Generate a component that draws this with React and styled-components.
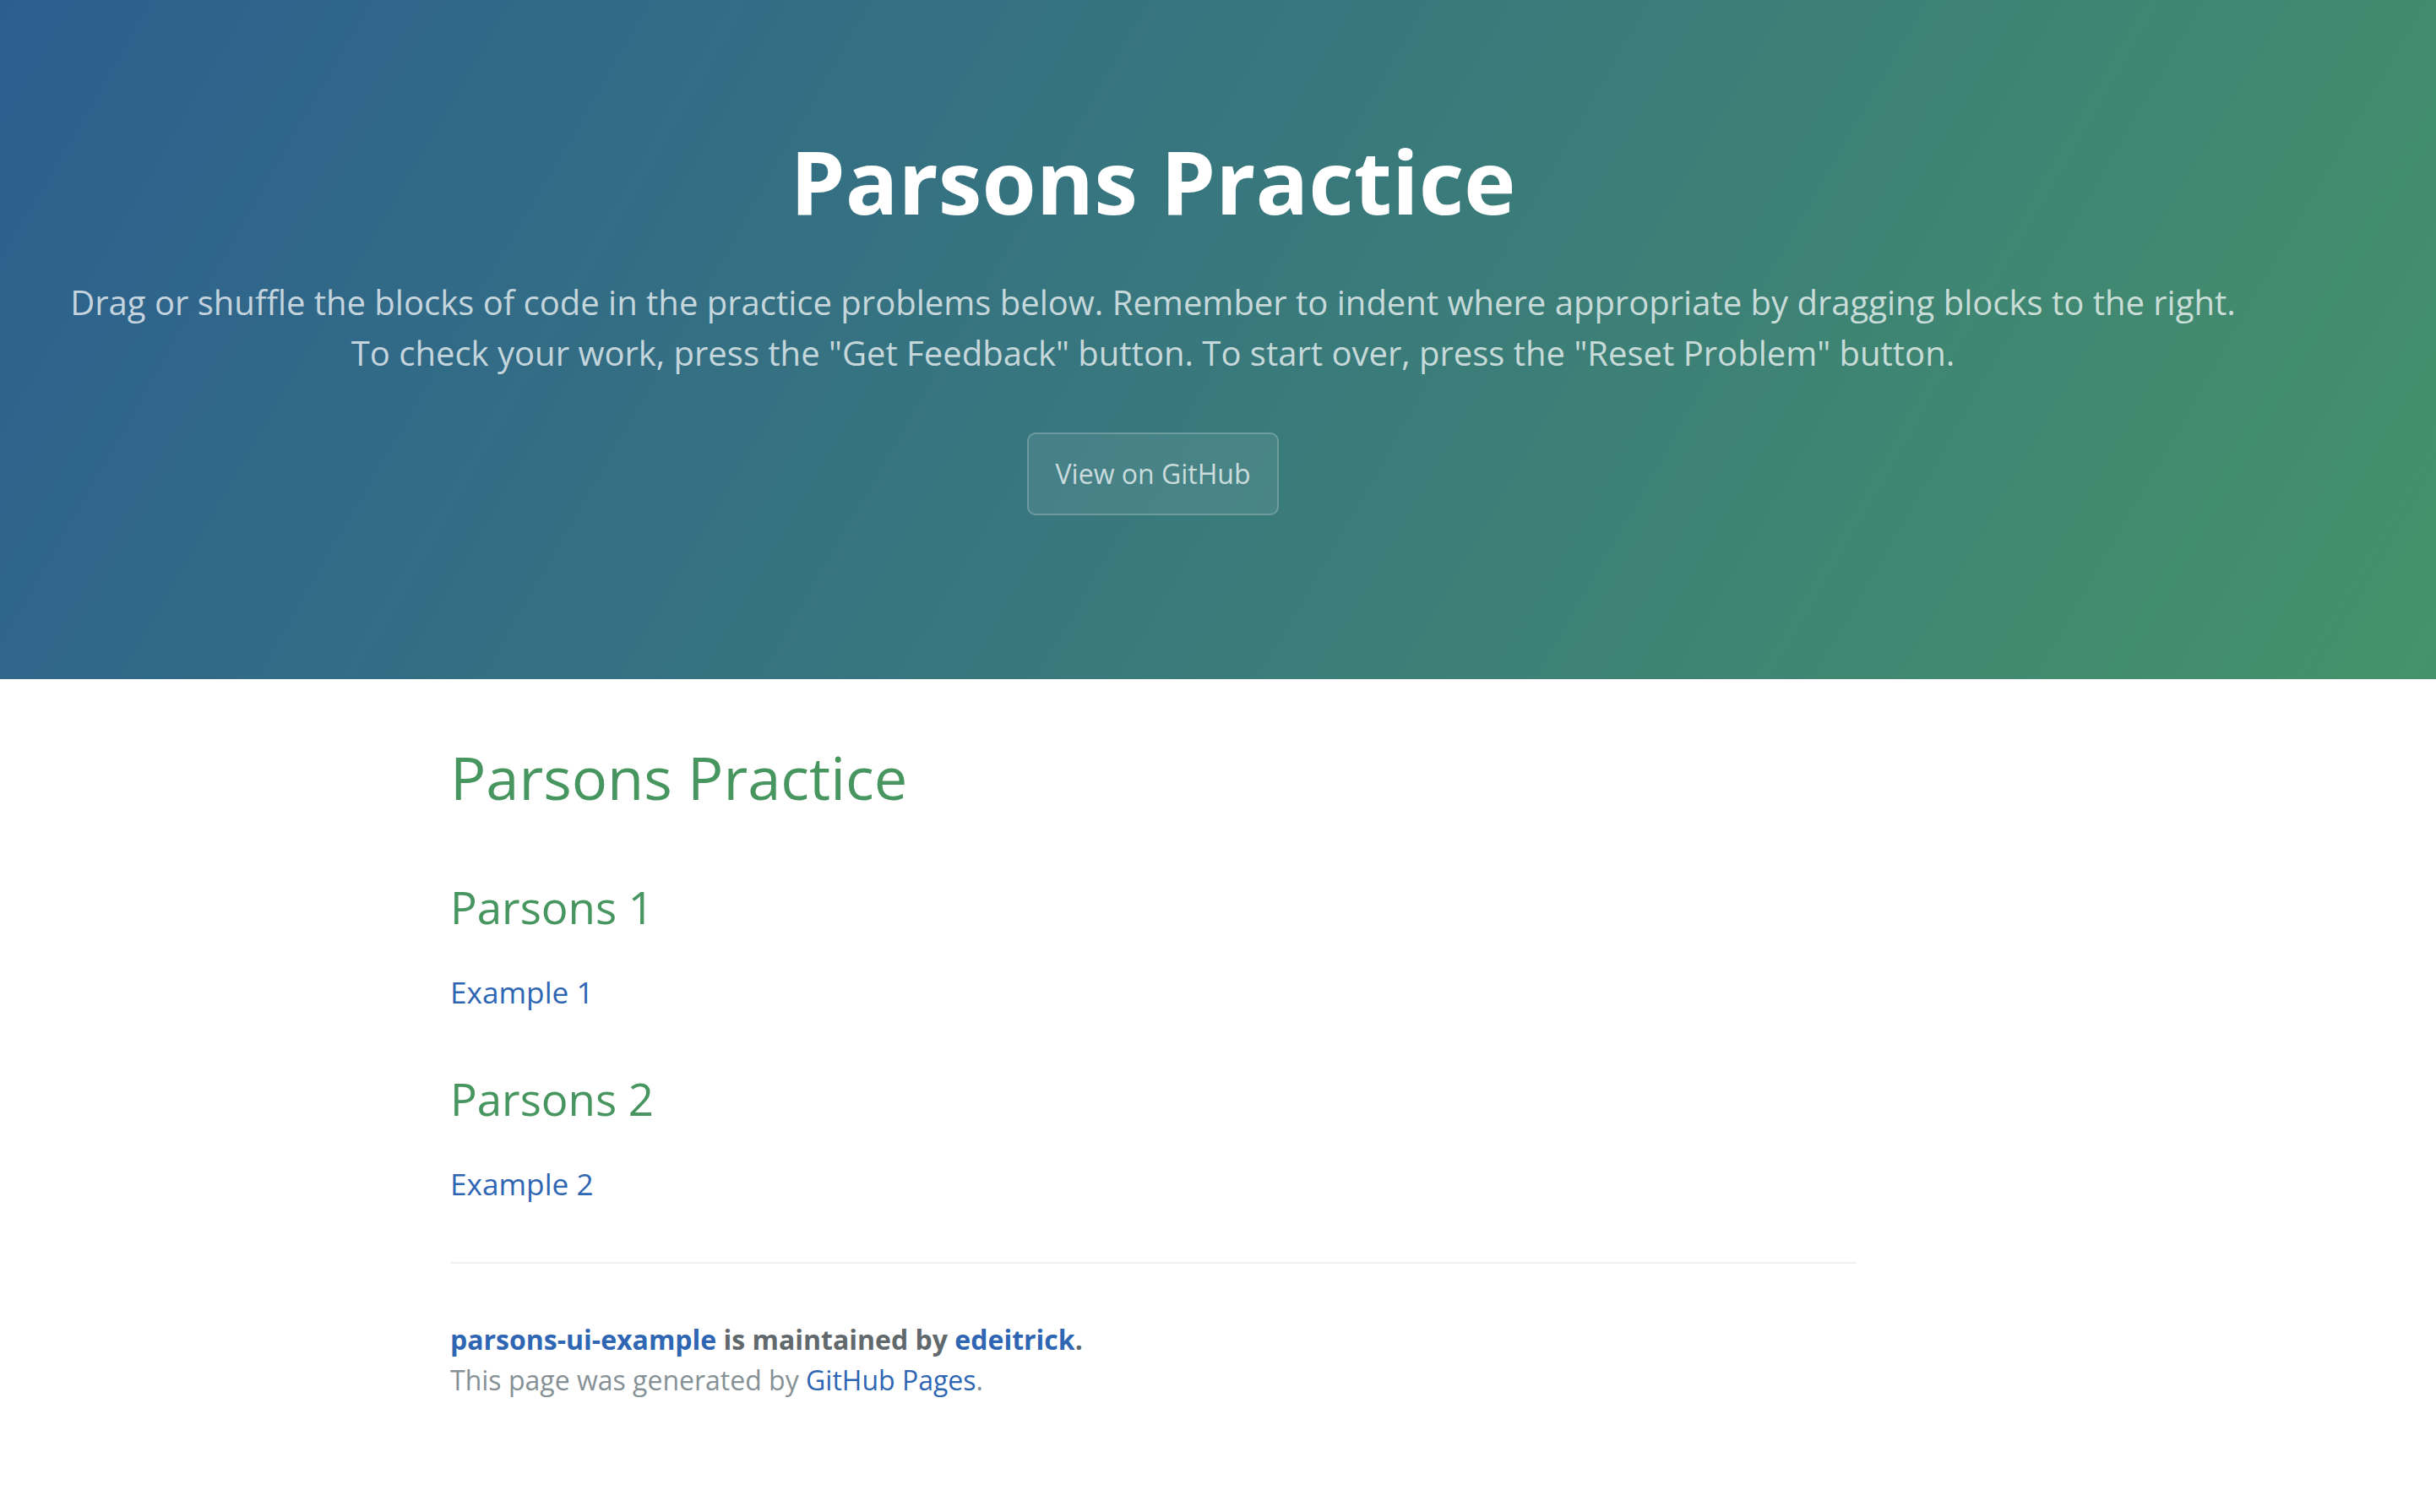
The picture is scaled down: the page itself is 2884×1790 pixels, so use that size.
import React from "react";
import styled, { createGlobalStyle } from "styled-components";

const GlobalStyle = createGlobalStyle`
  *, *::before, *::after { box-sizing: border-box; }
  html, body { margin: 0; padding: 0; background: #ffffff; }
  body {
    font-family: "Open Sans", "Liberation Sans", Arial, sans-serif;
    line-height: 1.5;
    color: #606c71;
  }
`;

const PageHeader = styled.section`
  display: flex;
  flex-direction: column;
  align-items: center;
  text-align: center;
  color: #ffffff;
  padding: 136px 205px 194px 51px;
  background-color: #3a7a7c;
  background-image: linear-gradient(120deg, #2c5f8f, #45926a);
`;

const ProjectName = styled.h1`
  margin: 0 0 3px;
  font-size: 104px;
  font-weight: 700;
  line-height: 1.5;
`;

const Tagline = styled.h2`
  margin: 33px 0 64px;
  font-size: 40px;
  font-weight: 400;
  line-height: 1.5;
  color: rgba(255, 255, 255, 0.72);
`;

const Button = styled.a`
  display: inline-block;
  padding: 24px 32px;
  font-size: 32px;
  line-height: 46px;
  color: rgba(255, 255, 255, 0.72);
  text-decoration: none;
  background-color: rgba(255, 255, 255, 0.08);
  border: 2px solid rgba(255, 255, 255, 0.2);
  border-radius: 10px;
`;

const MainContent = styled.section`
  width: 2048px;
  margin-left: 341px;
  padding: 64px 192px;
  font-size: 35.2px;
  line-height: 1.5;
`;

const Title = styled.h1`
  margin: 0 0 32px;
  font-size: 70.4px;
  font-weight: 400;
  line-height: 1.5;
  color: #47955f;
`;

const Subtitle = styled.h2`
  margin: 60px 0 32px;
  font-size: 52.8px;
  font-weight: 400;
  line-height: 1.5;
  color: #47955f;
`;

const Paragraph = styled.p`
  margin: 35.2px 0;
`;

const Link = styled.a`
  color: #2f66b3;
  text-decoration: none;
  font-weight: ${(p) => (p.$bold ? 700 : "inherit")};
`;

const Footer = styled.footer`
  margin-top: 66px;
  padding-top: 66px;
  border-top: 2px solid #eef0f1;
  font-size: 32px;
  line-height: 1.5;
`;

const Owner = styled.span`
  display: block;
  font-weight: 700;
  color: #61696d;
`;

const Credits = styled.span`
  display: block;
  color: #869196;
`;

export default function App() {
  return (
    <>
      <GlobalStyle />
      <PageHeader>
        <ProjectName>Parsons Practice</ProjectName>
        <Tagline>
          Drag or shuffle the blocks of code in the practice problems below. Remember to indent where appropriate by dragging blocks to the right.
          <br />
          To check your work, press the "Get Feedback" button. To start over, press the "Reset Problem" button.
        </Tagline>
        <Button href="#">View on GitHub</Button>
      </PageHeader>
      <MainContent>
        <Title>Parsons Practice</Title>
        <Subtitle>Parsons 1</Subtitle>
        <Paragraph>
          <Link href="#">Example 1</Link>
        </Paragraph>
        <Subtitle>Parsons 2</Subtitle>
        <Paragraph>
          <Link href="#">Example 2</Link>
        </Paragraph>
        <Footer>
          <Owner>
            <Link href="#" $bold>parsons-ui-example</Link> is maintained by{" "}
            <Link href="#" $bold>edeitrick</Link>.
          </Owner>
          <Credits>
            This page was generated by <Link href="#">GitHub Pages</Link>.
          </Credits>
        </Footer>
      </MainContent>
    </>
  );
}
